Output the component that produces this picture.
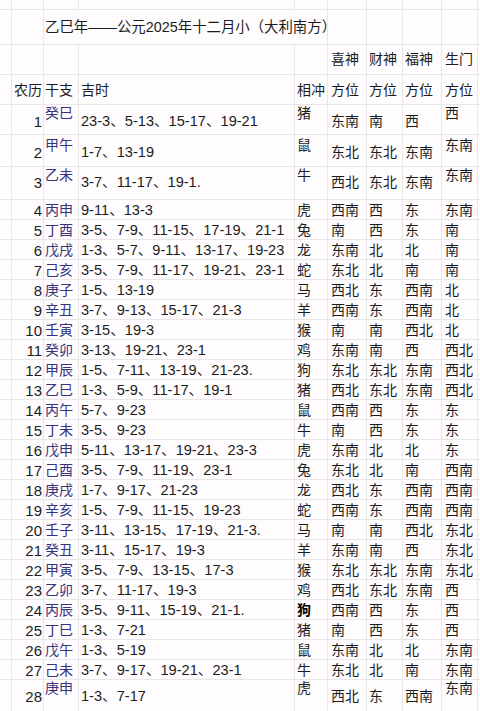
import React from "react";

type Row = [number, string, string, string, string, string, string, string];

const rows: Row[] = [
  [1, "癸巳", "23-3、5-13、15-17、19-21", "猪", "东南", "南", "西", "西"],
  [2, "甲午", "1-7、13-19", "鼠", "东北", "东北", "东南", "东南"],
  [3, "乙未", "3-7、11-17、19-1.", "牛", "西北", "东北", "东南", "东南"],
  [4, "丙申", "9-11、13-3", "虎", "西南", "西", "东", "东南"],
  [5, "丁酉", "3-5、7-9、11-15、17-19、21-1", "兔", "南", "西", "东", "南"],
  [6, "戊戌", "1-3、5-7、9-11、13-17、19-23", "龙", "东南", "北", "北", "南"],
  [7, "己亥", "3-5、7-9、11-17、19-21、23-1", "蛇", "东北", "北", "南", "南"],
  [8, "庚子", "1-5、13-19", "马", "西北", "东", "西南", "北"],
  [9, "辛丑", "3-7、9-13、15-17、21-3", "羊", "西南", "东", "西南", "北"],
  [10, "壬寅", "3-15、19-3", "猴", "南", "南", "西北", "北"],
  [11, "癸卯", "3-13、19-21、23-1", "鸡", "东南", "南", "西", "西北"],
  [12, "甲辰", "1-5、7-11、13-19、21-23.", "狗", "东北", "东北", "东南", "西北"],
  [13, "乙巳", "1-3、5-9、11-17、19-1", "猪", "西北", "东北", "东南", "西北"],
  [14, "丙午", "5-7、9-23", "鼠", "西南", "西", "东", "东"],
  [15, "丁未", "3-5、9-23", "牛", "南", "西", "东", "东"],
  [16, "戊申", "5-11、13-17、19-21、23-3", "虎", "东南", "北", "北", "东"],
  [17, "己酉", "3-5、7-9、11-19、23-1", "兔", "东北", "北", "南", "西南"],
  [18, "庚戌", "1-7、9-17、21-23", "龙", "西北", "东", "西南", "西南"],
  [19, "辛亥", "1-5、7-9、11-15、19-23", "蛇", "西南", "东", "西南", "西南"],
  [20, "壬子", "3-11、13-15、17-19、21-3.", "马", "南", "南", "西北", "东北"],
  [21, "癸丑", "3-11、15-17、19-3", "羊", "东南", "南", "西", "东北"],
  [22, "甲寅", "3-5、7-9、13-15、17-3", "猴", "东北", "东北", "东南", "东北"],
  [23, "乙卯", "3-7、11-17、19-3", "鸡", "西北", "东北", "东南", "西"],
  [24, "丙辰", "3-5、9-11、15-19、21-1.", "狗", "西南", "西", "东", "西"],
  [25, "丁巳", "1-3、7-21", "猪", "南", "西", "东", "西"],
  [26, "戊午", "1-3、5-19", "鼠", "东南", "北", "北", "东南"],
  [27, "己未", "3-7、9-17、19-21、23-1", "牛", "东北", "北", "南", "东南"],
  [28, "庚申", "1-3、7-17", "虎", "西北", "东", "西南", "东南"],
];

// [height, topPad, bottomPad] for tall rows; others 20px
const tall: Record<number, [number, number, number]> = {
  1: [30, 0, 8],
  2: [32, 2, 9],
  3: [33, 0, 7],
  28: [32, 0, 8],
};

const cols = "grid grid-cols-[12px_32px_35px_216px_33px_39px_36px_39px_36px_12px]";
const cell = "border-r border-b border-[#e8e6e8] overflow-visible whitespace-nowrap";

function DataRow({ r }: { r: Row }) {
  const [n, gz, js, xc, a, b, c, d] = r;
  const t = tall[n];
  const h = t ? t[0] : 20;
  const tp = t ? t[1] : 2;
  const bp = t ? t[2] : 2;
  const topStyle = { paddingTop: tp };
  const botStyle = { paddingTop: bp };
  return (
    <div className={cols} style={{ height: h }}>
      <div className={cell} />
      <div className={`${cell} text-right pr-[1px] text-[15px] leading-[16px]`} style={{ paddingTop: bp + 1 }}>
        {n}
      </div>
      <div className={`${cell} pl-[1px] text-[14px] leading-[16px] text-[#36337f]`} style={topStyle}>
        {gz}
      </div>
      <div className={`${cell} pl-[2px] text-[14.6px] leading-[16px]`} style={botStyle}>
        {js}
      </div>
      <div className={`${cell} pl-[2px] text-[14px] leading-[16px] ${n === 24 ? "font-semibold text-black" : ""}`} style={topStyle}>
        {xc}
      </div>
      <div className={`${cell} pl-[3px] text-[14px] leading-[16px]`} style={botStyle}>
        {a}
      </div>
      <div className={`${cell} pl-[2px] text-[14px] leading-[16px]`} style={botStyle}>
        {b}
      </div>
      <div className={`${cell} pl-[2px] text-[14px] leading-[16px]`} style={botStyle}>
        {c}
      </div>
      <div className={`${cell} pl-[3px] text-[14px] leading-[16px]`} style={topStyle}>
        {d}
      </div>
      <div className={cell} />
    </div>
  );
}

function Empty({ h }: { h: number }) {
  return (
    <div className={cols} style={{ height: h }}>
      {Array.from({ length: 10 }).map((_, i) => (
        <div key={i} className={cell} />
      ))}
    </div>
  );
}

export default function App() {
  return (
    <div
      className="w-[480px] h-[711px] overflow-hidden bg-[#fefcfd] text-[#1c1c1c]"
      style={{ fontFamily: '"Liberation Sans", "Noto Sans CJK SC", sans-serif' }}
    >
      <Empty h={10} />
      {/* title row */}
      <div className={cols} style={{ height: 35 }}>
        <div className={cell} />
        <div className={cell} />
        <div className={`${cell} col-span-3 pl-[1px] pt-[9px] text-[14.4px] leading-[16px]`}>
          乙巳年——公元2025年十二月小（大利南方）
        </div>
        <div className={cell} />
        <div className={cell} />
        <div className={cell} />
        <div className={cell} />
        <div className={cell} />
      </div>
      {/* header row 2 */}
      <div className={cols} style={{ height: 30 }}>
        <div className={cell} />
        <div className={cell} />
        <div className={cell} />
        <div className={cell} />
        <div className={cell} />
        <div className={`${cell} pl-[3px] pt-[6px] text-[14px] leading-[16px]`}>喜神</div>
        <div className={`${cell} pl-[2px] pt-[6px] text-[14px] leading-[16px]`}>财神</div>
        <div className={`${cell} pl-[2px] pt-[6px] text-[14px] leading-[16px]`}>福神</div>
        <div className={`${cell} pl-[3px] pt-[6px] text-[14px] leading-[16px]`}>生门</div>
        <div className={cell} />
      </div>
      {/* header row 3 */}
      <div className={cols} style={{ height: 30 }}>
        <div className={cell} />
        <div className={`${cell} pl-[2px] pt-[7px] text-[14px] leading-[16px]`}>农历</div>
        <div className={`${cell} pl-[1px] pt-[7px] text-[14px] leading-[16px]`}>干支</div>
        <div className={`${cell} pl-[2px] pt-[7px] text-[14px] leading-[16px]`}>吉时</div>
        <div className={`${cell} pl-[2px] pt-[7px] text-[14px] leading-[16px]`}>相冲</div>
        <div className={`${cell} pl-[3px] pt-[7px] text-[14px] leading-[16px]`}>方位</div>
        <div className={`${cell} pl-[2px] pt-[7px] text-[14px] leading-[16px]`}>方位</div>
        <div className={`${cell} pl-[2px] pt-[7px] text-[14px] leading-[16px]`}>方位</div>
        <div className={`${cell} pl-[3px] pt-[7px] text-[14px] leading-[16px]`}>方位</div>
        <div className={cell} />
      </div>
      {rows.map((r) => (
        <DataRow key={r[0]} r={r} />
      ))}
    </div>
  );
}
